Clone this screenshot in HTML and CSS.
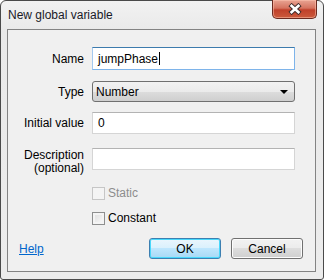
FILE: index.html
```html
<!DOCTYPE html>
<html lang="en">
<head>
  <meta charset="UTF-8" />
  <title>New global variable</title>
  <link rel="stylesheet" href="styles.css">
</head>
<body>
  <div class="window">
    <div class="titlebar">
      <span class="title">New global variable</span>
      <button class="close" aria-label="Close">
        <svg width="16" height="12" viewBox="0 0 16 12">
          <path d="M3 1.5 L13 10.5 M13 1.5 L3 10.5" stroke="#3c2a2a" stroke-width="4.6" stroke-linecap="butt"/>
          <path d="M3.6 2 L12.4 10 M12.4 2 L3.6 10" stroke="#fff" stroke-width="2.6"/>
        </svg>
      </button>
    </div>

    <div class="client">
      <div class="row row-name">
        <label class="label">Name</label>
        <div class="field text focused">jumpPhase<span class="caret"></span></div>
      </div>

      <div class="row row-type">
        <label class="label">Type</label>
        <div class="field select">
          <span>Number</span>
          <span class="arrow"></span>
        </div>
      </div>

      <div class="row row-initial">
        <label class="label">Initial value</label>
        <div class="field text">0</div>
      </div>

      <div class="row row-desc">
        <label class="label label-multi">Description<br>(optional)</label>
        <div class="field text"></div>
      </div>

      <div class="check disabled">
        <span class="box"></span>
        <span>Static</span>
      </div>

      <div class="check check-constant">
        <span class="box"></span>
        <span>Constant</span>
      </div>

      <div class="footer">
        <a href="#" class="help">Help</a>
        <div class="buttons">
          <button class="btn btn-default">OK</button>
          <button class="btn">Cancel</button>
        </div>
      </div>
    </div>
  </div>
</body>
</html>
```

FILE: styles.css
```css
* {
  box-sizing: border-box;
}

body {
  margin: 0;
  width: 324px;
  height: 280px;
  font-family: "Segoe UI", "Liberation Sans", Arial, sans-serif;
  font-size: 12px;
  color: #000;
  background: #fff;
}

.window {
  width: 324px;
  height: 280px;
  border: 1px solid #4a4a4a;
  border-radius: 6px 6px 3px 3px;
  background: linear-gradient(#f2f2f2, #e9e9e9 30px, #ececec);
  padding: 0 7px 7px 6px;
  display: flex;
  flex-direction: column;
}

.titlebar {
  height: 28px;
  display: flex;
  align-items: flex-start;
  justify-content: space-between;
}

.title {
  margin-top: 7px;
  margin-left: 1px;
  font-size: 12px;
  color: #1a1a28;
}

.close {
  width: 45px;
  height: 19px;
  margin-top: -1px;
  margin-right: -1px;
  padding: 0;
  border: 1px solid #6b2a20;
  border-top: none;
  border-radius: 0 0 5px 5px;
  background: linear-gradient(#e9a493, #d5735f 45%, #c0402a 55%, #cc5a3c);
  box-shadow: inset 0 0 0 1px rgba(255, 200, 180, 0.5);
  display: flex;
  align-items: center;
  justify-content: center;
}

.client {
  flex: 1;
  border: 1px solid #838383;
  background: #f0f0f0;
  padding: 17px 0 0 0;
  display: flex;
  flex-direction: column;
}

.row {
  display: flex;
  align-items: center;
}

.label {
  width: 77px;
  text-align: right;
  padding-right: 1px;
  margin-right: 7px;
}

.field {
  width: 203px;
  height: 22px;
  background: #fff;
  border: 1px solid #d5d5d5;
  border-top-color: #b3b3b3;
  display: flex;
  align-items: center;
  padding-left: 5px;
}

.field.focused {
  height: 23px;
  border-color: #7eb4ea;
  border-top-color: #3d7bad;
  border-left-color: #a4c9ef;
}

.caret {
  display: inline-block;
  width: 1px;
  height: 13px;
  background: #000;
  margin-left: 1px;
}

.row-type {
  margin-top: 11px;
}

.select {
  height: 21px;
  border: 1px solid #707070;
  border-radius: 3px;
  background: linear-gradient(#f2f2f2, #ebebeb 50%, #dddddd 50%, #cfcfcf);
  justify-content: space-between;
  padding-left: 3px;
  padding-right: 6px;
}

.arrow {
  width: 0;
  height: 0;
  border-left: 4px solid transparent;
  border-right: 4px solid transparent;
  border-top: 4px solid #000;
}

.row-initial {
  margin-top: 10px;
}

.row-desc {
  margin-top: 14px;
  height: 22px;
  align-items: flex-start;
}

.label-multi {
  line-height: 13px;
  margin-top: 1px;
}

.check {
  display: flex;
  align-items: center;
  margin-left: 84px;
  margin-top: 16px;
  gap: 3px;
}

.check .box {
  width: 13px;
  height: 13px;
  border: 1px solid #8e8f8f;
  background: linear-gradient(135deg, #dcdcdc, #fbfbfb);
  box-shadow: inset 0 0 0 2px #f4f4f4;
}

.check.disabled {
  color: #8d8d8d;
}

.check.disabled .box {
  border-color: #c6c6c6;
  background: #f4f4f4;
  box-shadow: none;
}

.check-constant {
  margin-top: 11px;
}

.footer {
  margin-top: 13px;
  display: flex;
  align-items: center;
  justify-content: space-between;
  padding-left: 11px;
  padding-right: 12px;
}

.help {
  color: #0066cc;
  text-decoration: underline;
}

.buttons {
  display: flex;
  gap: 10px;
}

.btn {
  width: 72px;
  height: 21px;
  font: inherit;
  color: #000;
  border: 1px solid #707070;
  border-radius: 3px;
  background: linear-gradient(#f2f2f2, #ebebeb 50%, #dddddd 50%, #cfcfcf);
  box-shadow: inset 0 0 0 1px #fcfcfc;
  padding: 0;
}

.btn-default {
  border-color: #3c7fb1;
  background: linear-gradient(#eaf6fd, #d9f0fc 50%, #bee6fd 50%, #a7d9f5);
  box-shadow: inset 0 0 0 1px #48d8fb;
}
```
